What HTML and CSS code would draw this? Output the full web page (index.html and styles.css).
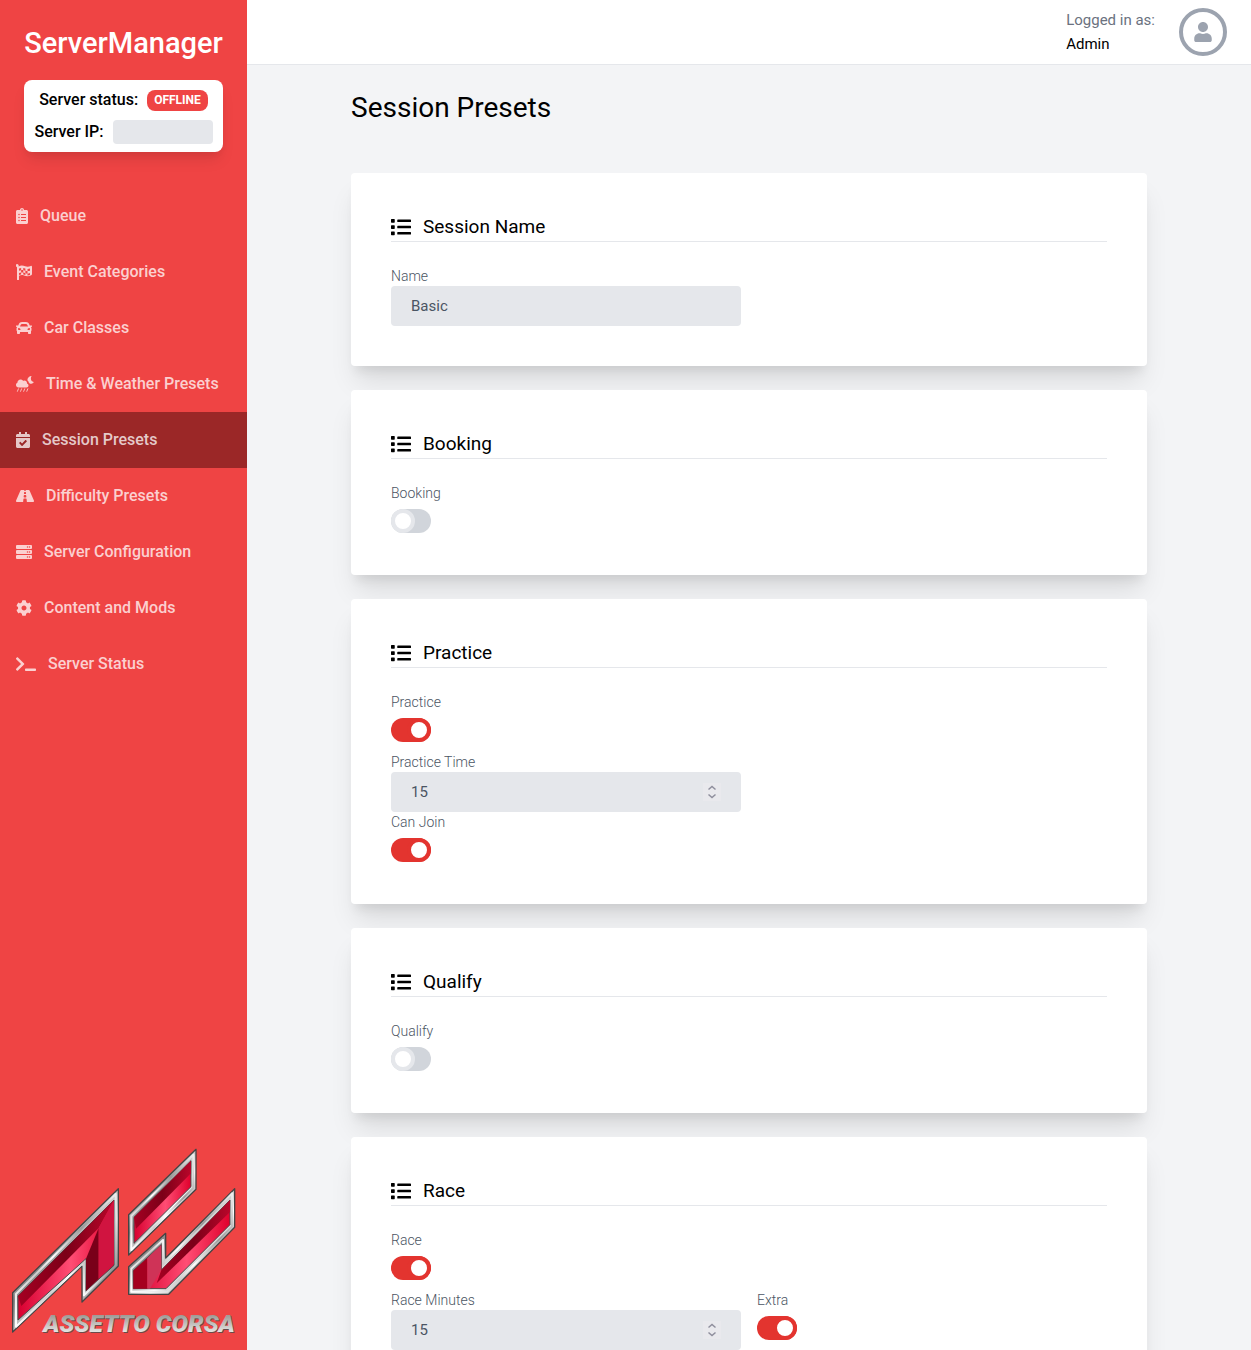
FILE: index.html
```html
<!DOCTYPE html>
<html lang="en">
<head>
<meta charset="utf-8">
<meta name="viewport" content="width=device-width, initial-scale=1">
<title>ServerManager - Session Presets</title>
<link rel="stylesheet" href="styles.css">
</head>
<body>
<svg class="defs" aria-hidden="true">
  <symbol id="i-list" viewBox="0 0 512 512"><path d="M80 368H16a16 16 0 0 0-16 16v64a16 16 0 0 0 16 16h64a16 16 0 0 0 16-16v-64a16 16 0 0 0-16-16zm0-320H16A16 16 0 0 0 0 64v64a16 16 0 0 0 16 16h64a16 16 0 0 0 16-16V64a16 16 0 0 0-16-16zm0 160H16a16 16 0 0 0-16 16v64a16 16 0 0 0 16 16h64a16 16 0 0 0 16-16v-64a16 16 0 0 0-16-16zm416 176H176a16 16 0 0 0-16 16v32a16 16 0 0 0 16 16h320a16 16 0 0 0 16-16v-32a16 16 0 0 0-16-16zm0-320H176a16 16 0 0 0-16 16v32a16 16 0 0 0 16 16h320a16 16 0 0 0 16-16V80a16 16 0 0 0-16-16zm0 160H176a16 16 0 0 0-16 16v32a16 16 0 0 0 16 16h320a16 16 0 0 0 16-16v-32a16 16 0 0 0-16-16z"/></symbol>
  <symbol id="i-spin" viewBox="0 0 18 18"><rect width="18" height="18" fill="#e9e9ed"/><path d="M5.500 6.500 9 3.500l3.500 3M5.500 11.500l3.500 3 3.500-3" fill="none" stroke="#8f8f9d" stroke-width="1.500"/></symbol>
</svg>
<div class="app">
  <aside class="sidebar">
    <div class="brand">
      <a class="brand-name" href="#">ServerManager</a>
      <div class="status">
        <div class="status-row"><span>Server status:</span><span class="badge">OFFLINE</span></div>
        <div class="status-row"><span>Server IP:</span><span class="ip"></span></div>
      </div>
    </div>
    <nav class="nav">
      <a href="#"><svg class="w12" viewBox="0 0 384 512"><path fill-rule="evenodd" d="M336 64h-80c0-35.300-28.700-64-64-64s-64 28.700-64 64H48C21.500 64 0 85.500 0 112v352c0 26.500 21.500 48 48 48h288c26.500 0 48-21.500 48-48V112c0-26.500-21.500-48-48-48zM96 424a24 24 0 1 1 0-48 24 24 0 0 1 0 48zm0-96a24 24 0 1 1 0-48 24 24 0 0 1 0 48zm0-96a24 24 0 1 1 0-48 24 24 0 0 1 0 48zm96-192a24 24 0 1 1 0 48 24 24 0 0 1 0-48zm128 376H160v-32h160zm0-96H160v-32h160zm0-96H160v-32h160z"/></svg>Queue</a>
      <a href="#"><svg class="w16" viewBox="0 0 512 512"><path fill-rule="evenodd" d="M32 0a54 54 0 0 1 50 76c70-40 150-30 210-4 70 28 130 14 180-12 20-10 40 4 40 26v236c0 20-10 30-26 38-90 46-160 30-230 6-60-20-110-10-160 10v118c0 10-8 18-18 18H50c-10 0-18-8-18-18V102A54 54 0 0 1 32 0zM96 146v68c24-10 44-16 68-18v-70c-24 2-46 8-68 20zm136-20v70c24 4 46 10 68 20v-72c-24-10-46-16-68-18zm136 30v70c30 2 56-4 80-12v-70c-26 8-50 14-80 12zM164 196v74c24-2 44-2 68 2v-76c-24-3-44-3-68 0zm136 20v76c24 8 44 12 68 10v-76c-24 0-46-2-68-10zM96 290v60c24-10 44-16 68-18v-62c-24 3-46 10-68 20zm136-18v62c24 4 46 10 68 16v-58c-24-10-44-16-68-20zm136 30v62c30 2 56-4 80-14v-66c-26 12-50 18-80 18z"/></svg>Event Categories</a>
      <a href="#"><svg class="w16" viewBox="0 0 512 512"><path d="M499.990 176h-59.870l-16.640-41.600C406.380 91.630 365.570 64 319.500 64h-127c-46.060 0-86.880 27.630-103.990 70.400L71.870 176H12.010C4.200 176-1.530 183.340.370 190.910l6 24C7.700 220.250 12.500 224 18.010 224h20.070C24.650 235.730 16 252.780 16 272v48c0 16.120 6.160 30.670 16 41.930V416c0 17.670 14.330 32 32 32h32c17.670 0 32-14.330 32-32v-32h256v32c0 17.670 14.330 32 32 32h32c17.670 0 32-14.330 32-32v-54.070c9.840-11.250 16-25.800 16-41.930v-48c0-19.220-8.650-36.270-22.070-48H494c5.510 0 10.310-3.750 11.640-9.090l6-24c1.890-7.570-3.840-14.910-11.650-14.910zm-352.060-17.830c7.290-18.220 24.940-30.170 44.570-30.170h127c19.630 0 37.280 11.950 44.570 30.170L384 208H128l19.930-49.830zM96 319.800c-19.200 0-32-12.760-32-31.900S76.800 256 96 256s48 28.710 48 47.850-28.800 15.950-48 15.950zm320 0c-19.200 0-48 3.190-48-15.950S396.800 256 416 256s32 12.760 32 31.900-12.800 31.900-32 31.900z"/></svg>Car Classes</a>
      <a href="#"><svg class="w18" viewBox="0 0 576 512"><path d="M350 225c2-6 2-11 2-17 0-44-36-80-80-80-17 0-33 6-46 15-16-28-46-47-82-47-53 0-96 43-96 96 0 2 1 4 1 6C20 212 0 240 0 272c0 44 36 80 80 80h256c35 0 64-29 64-64 0-31-21-56-50-63z" transform="translate(0 12)"/><path d="M500 0a135 135 0 0 0-136 134c26 18 42 44 44 74 20 14 26 24 30 40 56 6 104-14 138-58-76 10-136-90-76-190z"/><path d="m78 410-32 80M178 410l-32 80M278 410l-32 80M378 410l-32 80" fill="none" stroke="currentColor" stroke-width="28" stroke-linecap="round"/></svg>Time &amp; Weather Presets</a>
      <a href="#" class="active" aria-current="page"><svg class="w14" viewBox="0 0 448 512"><path d="M436 160H12c-6.627 0-12-5.373-12-12v-36c0-26.510 21.490-48 48-48h48V12c0-6.627 5.373-12 12-12h40c6.627 0 12 5.373 12 12v52h128V12c0-6.627 5.373-12 12-12h40c6.627 0 12 5.373 12 12v52h48c26.510 0 48 21.490 48 48v36c0 6.627-5.373 12-12 12zM12 192h424c6.627 0 12 5.373 12 12v260c0 26.510-21.490 48-48 48H48c-26.510 0-48-21.490-48-48V204c0-6.627 5.373-12 12-12zm333.296 95.947l-28.169-28.398c-4.667-4.705-12.265-4.736-16.970-.068L194.120 364.665l-45.980-46.352c-4.667-4.705-12.266-4.736-16.971-.068l-28.397 28.170c-4.705 4.667-4.736 12.265-.068 16.970l82.601 83.269c4.667 4.705 12.265 4.736 16.970.068l142.953-141.805c4.705-4.667 4.736-12.265.068-16.970z"/></svg>Session Presets</a>
      <a href="#"><svg class="w18" viewBox="0 0 576 512"><path d="M573.190 402.670l-139.790-320C428.430 71.290 417.600 64 405.680 64h-97.590l2.450 23.160c.5 4.720-3.210 8.840-7.960 8.840h-29.160c-4.750 0-8.460-4.120-7.960-8.840L267.910 64h-97.590c-11.930 0-22.760 7.290-27.730 18.670L2.800 402.670C-6.450 423.860 8.310 448 30.540 448h196.840l10.310-97.680c.86-8.140 7.720-14.320 15.910-14.320h68.800c8.190 0 15.050 6.180 15.910 14.320L348.620 448h196.840c22.230 0 36.990-24.140 27.730-45.330zM260.400 135.160a8 8 0 0 1 7.960-7.160h39.290c4.090 0 7.530 3.090 7.960 7.160l4.600 43.580c.75 7.090-4.810 13.260-11.930 13.260h-40.540c-7.130 0-12.680-6.170-11.930-13.260l4.590-43.580zM315.640 304h-55.290c-9.500 0-16.910-8.230-15.910-17.680l5.070-48c.86-8.140 7.720-14.320 15.910-14.320h45.150c8.190 0 15.050 6.180 15.910 14.320l5.070 48c1 9.450-6.410 17.680-15.910 17.680z"/></svg>Difficulty Presets</a>
      <a href="#"><svg class="w16" viewBox="0 0 512 512"><path fill-rule="evenodd" d="M32 32h448a32 32 0 0 1 32 32v64a32 32 0 0 1-32 32H32a32 32 0 0 1-32-32V64a32 32 0 0 1 32-32zm400 40a24 24 0 1 0 0 48 24 24 0 0 0 0-48zm-64 0a24 24 0 1 0 0 48 24 24 0 0 0 0-48zM32 192h448a32 32 0 0 1 32 32v64a32 32 0 0 1-32 32H32a32 32 0 0 1-32-32v-64a32 32 0 0 1 32-32zm400 40a24 24 0 1 0 0 48 24 24 0 0 0 0-48zm-64 0a24 24 0 1 0 0 48 24 24 0 0 0 0-48zM32 352h448a32 32 0 0 1 32 32v64a32 32 0 0 1-32 32H32a32 32 0 0 1-32-32v-64a32 32 0 0 1 32-32zm400 40a24 24 0 1 0 0 48 24 24 0 0 0 0-48zm-64 0a24 24 0 1 0 0 48 24 24 0 0 0 0-48z"/></svg>Server Configuration</a>
      <a href="#"><svg class="w16" viewBox="0 0 512 512"><path d="M487.400 315.700l-42.600-24.600c4.300-23.200 4.300-47 0-70.200l42.600-24.600c4.900-2.800 7.100-8.600 5.500-14-11.100-35.600-30-67.800-54.700-94.600-3.800-4.100-10-5.100-14.800-2.300L380.800 110c-17.900-15.400-38.500-27.300-60.800-35.100V25.800c0-5.600-3.900-10.500-9.400-11.700-36.700-8.200-74.300-7.800-109.200 0-5.500 1.200-9.400 6.100-9.400 11.700V75c-22.200 7.900-42.800 19.800-60.800 35.100L88.700 85.500c-4.900-2.800-11-1.900-14.800 2.300-24.700 26.700-43.600 58.900-54.700 94.600-1.700 5.400.6 11.200 5.500 14L67.300 221c-4.300 23.200-4.300 47 0 70.200l-42.600 24.600c-4.900 2.800-7.100 8.600-5.500 14 11.100 35.600 30 67.800 54.700 94.600 3.800 4.100 10 5.100 14.800 2.300l42.600-24.600c17.900 15.400 38.500 27.300 60.800 35.100v49.200c0 5.600 3.900 10.500 9.400 11.700 36.700 8.200 74.300 7.800 109.200 0 5.500-1.200 9.400-6.100 9.400-11.700v-49.200c22.200-7.900 42.800-19.800 60.800-35.100l42.600 24.600c4.900 2.800 11 1.900 14.800-2.300 24.700-26.700 43.600-58.900 54.700-94.600 1.500-5.500-.7-11.300-5.600-14.100zM256 336c-44.100 0-80-35.900-80-80s35.900-80 80-80 80 35.900 80 80-35.900 80-80 80z"/></svg>Content and Mods</a>
      <a href="#"><svg class="w20" viewBox="0 0 640 512"><path d="M257.981 272.971L63.638 467.314c-9.373 9.373-24.569 9.373-33.941 0L7.029 444.647c-9.357-9.357-9.375-24.522-.04-33.901L161.011 256 6.990 101.255c-9.335-9.379-9.317-24.544.04-33.901l22.667-22.667c9.373-9.373 24.569-9.373 33.941 0L257.981 239.030c9.373 9.372 9.373 24.568 0 33.941zM640 456v-32c0-13.255-10.745-24-24-24H312c-13.255 0-24 10.745-24 24v32c0 13.255 10.745 24 24 24h304c13.255 0 24-10.745 24-24z"/></svg>Server Status</a>
    </nav>
    <svg class="logo" viewBox="0 0 672 570" role="img" aria-label="Assetto Corsa">
      <defs>
        <linearGradient id="chrome" x1="0" y1="0" x2="1" y2="1"><stop offset="0" stop-color="#555"/><stop offset=".2" stop-color="#eee"/><stop offset=".4" stop-color="#888"/><stop offset=".6" stop-color="#fff"/><stop offset=".8" stop-color="#777"/><stop offset="1" stop-color="#ddd"/></linearGradient>
        <linearGradient id="rim" x1="0" y1="1" x2="1" y2="0"><stop offset="0" stop-color="#fff"/><stop offset=".3" stop-color="#ccc"/><stop offset=".45" stop-color="#fff"/><stop offset=".7" stop-color="#999"/><stop offset="1" stop-color="#eee"/></linearGradient>
        <linearGradient id="dark" x1="0" y1="0" x2="1" y2="0"><stop offset="0" stop-color="#a50022"/><stop offset=".5" stop-color="#7c0018"/><stop offset="1" stop-color="#b8062a"/></linearGradient>
        <linearGradient id="light" x1="0" y1="0" x2="1" y2="0"><stop offset="0" stop-color="#d80030"/><stop offset=".55" stop-color="#ff4d74"/><stop offset="1" stop-color="#e0002c"/></linearGradient>
        <linearGradient id="steel" x1="0" y1="0" x2="0" y2="1"><stop offset="0" stop-color="#85827c"/><stop offset="1" stop-color="#fff"/></linearGradient>
      </defs>
      <g transform="translate(-36 -24)" stroke-linejoin="round">
        <g fill="url(#chrome)" stroke="#444" stroke-width="4">
          <path d="M38 458 355 146v232L246 486V378L38 576z"/>
          <path d="M386 224 588 28v120L386 345z"/>
          <path d="M386 380 497 280v74L704 146v116L506 463H386z"/>
        </g>
        <g fill="none" stroke="url(#rim)" stroke-width="6">
          <path d="M48 462 347 162v212L252 466V366L48 560z"/>
          <path d="M394 228 580 44v100L394 330z"/>
          <path d="M394 386 489 300v72L696 160v100L502 455H394z"/>
        </g>
        <g stroke="#4a4a4a" stroke-width="3">
          <path fill="url(#light)" d="M54 468 342 180v196L258 452V356L54 540z"/>
          <path fill="url(#light)" d="M402 232 573 62v78L402 310z"/>
          <path fill="url(#light)" d="M400 392 484 314v76L690 180v74L498 446H400z"/>
        </g>
        <path fill="url(#dark)" d="M54 468 342 180 296 264 64 498z"/>
        <path fill="#790019" d="m296 264-38 92v96l38-36z"/>
        <path fill="#d01440" d="m342 180-46 84v152l46-44z"/>
        <path fill="url(#dark)" d="M402 232 573 62v38L408 266z"/>
        <path fill="#a5001f" d="m400 392 42-38v92h-42z"/>
        <path fill="#cf3357" d="m442 354 42-40v76l-34 56h-8z"/>
        <path fill="url(#dark)" d="M484 390 690 180v36L470 430z"/>
        <text x="132" y="579" class="logo-shadow">ASSETTO CORSA</text>
        <text x="130" y="577" class="logo-text" fill="url(#steel)">ASSETTO CORSA</text>
      </g>
    </svg>
  </aside>
  <div class="page">
    <header class="topbar">
      <div class="user"><span class="muted">Logged in as:</span><span>Admin</span></div>
      <button class="avatar" type="button" aria-label="Account"><svg viewBox="0 0 448 512"><path d="M224 256c70.700 0 128-57.300 128-128S294.700 0 224 0 96 57.300 96 128s57.300 128 128 128zm89.600 32h-16.700c-22.200 10.200-46.900 16-72.900 16s-50.600-5.800-72.900-16h-16.700C60.200 288 0 348.200 0 422.400V464c0 26.500 21.500 48 48 48h352c26.500 0 48-21.500 48-48v-41.600c0-74.200-60.200-134.400-134.400-134.400z"/></svg></button>
    </header>
    <main class="content">
      <form class="container">
        <h1>Session Presets</h1>
        <section class="card">
          <h2><svg><use href="#i-list"/></svg>Session Name</h2>
          <div class="fields">
            <div class="field"><label for="name">Name</label><input class="input" id="name" type="text" value="Basic"></div>
          </div>
        </section>
        <section class="card">
          <h2><svg><use href="#i-list"/></svg>Booking</h2>
          <div class="fields">
            <div class="field"><label for="booking">Booking</label><input class="toggle" id="booking" type="checkbox"></div>
          </div>
        </section>
        <section class="card">
          <h2><svg><use href="#i-list"/></svg>Practice</h2>
          <div class="fields lead">
            <div class="field"><label for="practice">Practice</label><input class="toggle" id="practice" type="checkbox" checked></div>
          </div>
          <div class="fields">
            <div class="field"><label for="practice-time">Practice Time</label><div class="number"><input class="input" id="practice-time" type="number" value="15"><svg><use href="#i-spin"/></svg></div></div>
          </div>
          <div class="fields">
            <div class="field"><label for="practice-join">Can Join</label><input class="toggle" id="practice-join" type="checkbox" checked></div>
          </div>
        </section>
        <section class="card">
          <h2><svg><use href="#i-list"/></svg>Qualify</h2>
          <div class="fields">
            <div class="field"><label for="qualify">Qualify</label><input class="toggle" id="qualify" type="checkbox"></div>
          </div>
        </section>
        <section class="card">
          <h2><svg><use href="#i-list"/></svg>Race</h2>
          <div class="fields lead">
            <div class="field"><label for="race">Race</label><input class="toggle" id="race" type="checkbox" checked></div>
          </div>
          <div class="fields">
            <div class="field"><label for="race-minutes">Race Minutes</label><div class="number"><input class="input" id="race-minutes" type="number" value="15"><svg><use href="#i-spin"/></svg></div></div>
            <div class="field"><label for="extra">Extra</label><input class="toggle" id="extra" type="checkbox" checked></div>
          </div>
        </section>
      </form>
    </main>
  </div>
</div>
</body>
</html>
```
FILE: styles.css
```css
*, *::before, *::after { box-sizing: border-box; }
body { margin: 0; font-family: Roboto, "Liberation Sans", sans-serif; font-size: 16px; line-height: 24px; color: #000; }
h1, h2 { margin: 0; font-weight: 400; }
a { color: inherit; text-decoration: none; }
svg { display: block; flex: none; }
.defs { position: absolute; width: 0; height: 0; }

.app { display: flex; height: 100vh; }
.sidebar { display: flex; flex-direction: column; flex: none; width: 247px; background: #ef4444; font-weight: 500; }
.brand { display: flex; flex-direction: column; gap: 19px; padding: 25px 24px 36px; }
.brand-name { color: #fff; font-size: 29px; line-height: 36px; text-align: center; white-space: nowrap; }
.status { display: flex; flex-direction: column; gap: 8px; padding: 8px; border-radius: 8px; background: #fff; box-shadow: 0 10px 15px -3px rgba(0, 0, 0, .1), 0 4px 6px -2px rgba(0, 0, 0, .05); }
.status-row { display: flex; align-items: center; justify-content: center; gap: 9px; height: 24px; white-space: nowrap; }
.badge { padding: 0 7px; border-radius: 8px; background: #ef4444; color: #fff; font-size: 12px; line-height: 21px; font-weight: 700; }
.ip { width: 100px; height: 24px; border-radius: 4px; background: #e5e7eb; }

.nav a { display: flex; align-items: center; gap: 12px; height: 56px; padding: 0 16px; color: rgba(255, 255, 255, .75); font-size: 16px; white-space: nowrap; }
.nav .active { background: #9b2727; }
.nav svg { height: 16px; fill: currentColor; }
.w12 { width: 12px; }
.w14 { width: 14px; }
.w16 { width: 16px; }
.w18 { width: 18px; }
.w20 { width: 20px; }

.logo { width: 224px; height: 190px; margin: auto 0 12px 12px; overflow: visible; }
.logo-text, .logo-shadow { font-family: Roboto, "Liberation Sans", sans-serif; font-size: 74px; font-weight: 900; font-style: italic; }
.logo-shadow { fill: #6b4a4a; }

.page { display: flex; flex-direction: column; flex: 1; min-width: 0; background: #f3f4f6; }
.topbar { display: flex; flex: none; align-items: center; justify-content: flex-end; gap: 24px; padding: 8px 24px; border-bottom: 1px solid #e5e7eb; background: #fff; }
.user { display: flex; flex-direction: column; font-size: 15px; }
.muted { color: #6b7280; }
.avatar { display: flex; align-items: center; justify-content: center; width: 48px; height: 48px; padding: 0; border: 4px solid #9ca3af; border-radius: 50%; background: #fff; }
.avatar svg { width: 18px; height: 20px; fill: #9ca3af; }

.content { flex: 1; min-height: 0; padding: 24px; overflow-y: auto; scrollbar-width: none; }
.container { display: flex; flex-direction: column; gap: 24px; max-width: 796px; margin: 0 auto; }
h1 { padding-top: 2px; margin-bottom: 24px; font-size: 28px; line-height: 34px; }
.card { padding: 40px; border-radius: 4px; background: #fff; box-shadow: 0 20px 25px -5px rgba(0, 0, 0, .1), 0 10px 10px -5px rgba(0, 0, 0, .08); }
h2 { display: flex; align-items: center; gap: 12px; margin-bottom: 24px; border-bottom: 1px solid #e5e7eb; font-size: 19px; line-height: 28px; }
h2 svg { width: 20px; height: 20px; }
.fields { display: grid; grid-template-columns: 1fr 1fr; column-gap: 16px; }
.lead { margin-bottom: 8px; }
.field { display: flex; flex-direction: column; }
.field label { color: #4b5563; font-size: 14px; line-height: 20px; font-weight: 300; }
.input { width: 100%; height: 40px; padding: 0 20px; border: 0; border-radius: 4px; background: #e5e7eb; color: #4b5563; font: inherit; font-size: 15px; appearance: textfield; }
.input::-webkit-inner-spin-button { appearance: none; }
.number { position: relative; }
.number svg { position: absolute; top: 11px; right: 20px; width: 18px; height: 18px; }
.toggle { position: relative; width: 40px; height: 24px; margin: 6px 0 2px; border-radius: 12px; background: #d1d5db; appearance: none; cursor: pointer; }
.toggle::before { content: ""; position: absolute; top: 0; left: 0; width: 24px; height: 24px; border: 4px solid #e5e7eb; border-radius: 50%; background: #fff; }
.toggle:checked { background: #e3342f; }
.toggle:checked::before { left: 16px; border-color: #e3342f; }
```
